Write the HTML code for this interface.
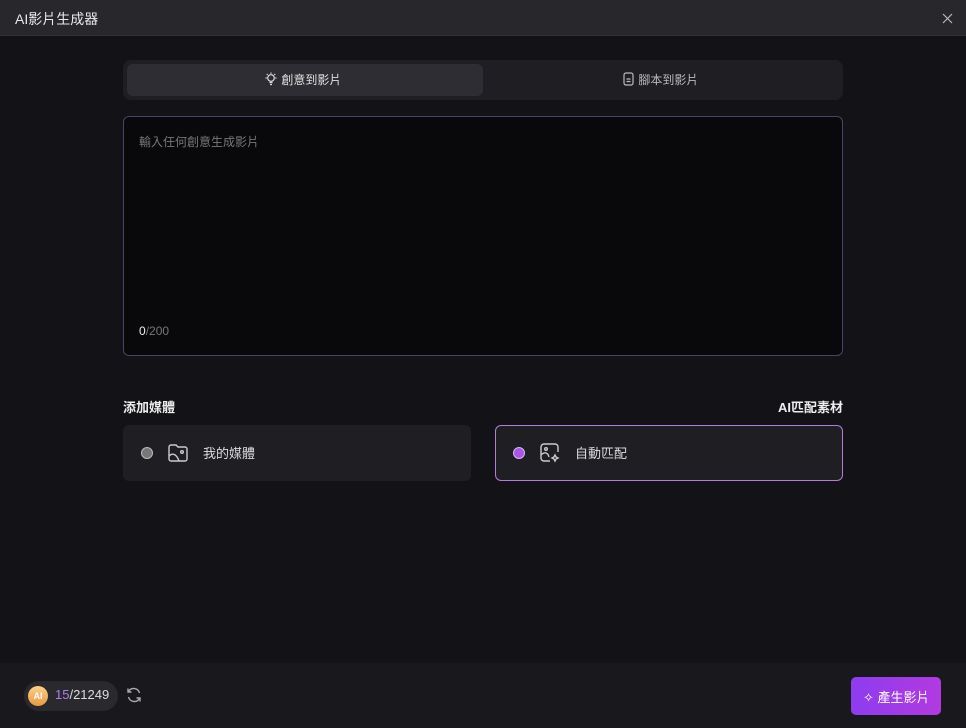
<!DOCTYPE html>
<html><head><meta charset="utf-8"><style>
*{box-sizing:border-box;margin:0;padding:0}
body{width:966px;height:728px;background:#131217;font-family:"Liberation Sans","Noto Sans CJK TC",sans-serif;color:#ddd;position:relative;overflow:hidden}
.abs{position:absolute}
</style></head><body>
<div class="abs" style="left:0;top:0;width:966px;height:36px;background:#28272c;border-bottom:1px solid #333238"></div>
<div class="abs" style="left:15px;top:9px;font-size:14px;color:#e8e8e8">AI影片生成器</div>
<svg class="abs" style="left:942px;top:13px" width="11" height="11" viewBox="0 0 11 11" stroke="#bbb" stroke-width="1.2"><path d="M1 1l9 9M10 1l-9 9"/></svg>

<div class="abs" style="left:123px;top:60px;width:720px;height:40px;background:#1f1e23;border-radius:8px"></div>
<div class="abs" style="left:127px;top:64px;width:356px;height:32px;background:#2e2d33;border-radius:6px"></div>
<div class="abs" style="left:264px;top:71px;font-size:12px;color:#e0e0e0">
<svg width="14" height="14" viewBox="0 0 14 14" style="vertical-align:-2px" fill="none" stroke="#ddd" stroke-width="1.2"><circle cx="7" cy="6" r="3.3"/><path d="M5.5 10.5h3M6 12.5h2M7 0.5v1.2M1.5 6h1.2M11.3 6h1.2M2.8 2l.9.9M11.2 2l-.9.9"/></svg> 創意到影片</div>
<div class="abs" style="left:622px;top:71px;font-size:12px;color:#bbb">
<svg width="13" height="14" viewBox="0 0 13 14" style="vertical-align:-2px" fill="none" stroke="#bbb" stroke-width="1.2"><rect x="2" y="1" width="9" height="12" rx="2"/><path d="M4.5 7h4M4.5 9.5h4"/></svg> 腳本到影片</div>

<div class="abs" style="left:123px;top:116px;width:720px;height:240px;background:#09080b;border:1px solid #4d4266;border-radius:6px"></div>
<div class="abs" style="left:139px;top:133px;font-size:12px;color:#777">輸入任何創意生成影片</div>
<div class="abs" style="left:139px;top:324px;font-size:12px;color:#777"><span style="color:#eee">0</span>/200</div>

<div class="abs" style="left:123px;top:397px;font-size:13px;font-weight:bold;color:#eee">添加媒體</div>
<div class="abs" style="right:123px;top:397px;font-size:13px;font-weight:bold;color:#eee">AI匹配素材</div>

<div class="abs" style="left:123px;top:425px;width:348px;height:56px;background:#1f1e23;border-radius:6px"></div>
<div class="abs" style="left:141px;top:447px;width:12px;height:12px;border-radius:50%;background:#777;border:1.5px solid #bbb"></div>
<svg class="abs" style="left:167px;top:442px" width="22" height="22" viewBox="0 0 22 22" fill="none" stroke="#ccc" stroke-width="1.4"><path d="M2 5a2 2 0 0 1 2-2h5l2 2h7a2 2 0 0 1 2 2v10a2 2 0 0 1-2 2H4a2 2 0 0 1-2-2z"/><path d="M2 14c4-4 8-1 10 5"/><circle cx="15" cy="10" r="1.3"/></svg>
<div class="abs" style="left:203px;top:443px;font-size:13px;color:#ddd">我的媒體</div>

<div class="abs" style="left:495px;top:425px;width:348px;height:56px;background:#1f1e23;border:1px solid #b27ed8;border-radius:6px"></div>
<div class="abs" style="left:513px;top:447px;width:12px;height:12px;border-radius:50%;background:#a855e8;border:1.5px solid #d9b3f5"></div>
<svg class="abs" style="left:539px;top:442px" width="22" height="22" viewBox="0 0 22 22" fill="none" stroke="#ccc" stroke-width="1.4"><path d="M11 19H5a3 3 0 0 1-3-3V5a3 3 0 0 1 3-3h11a3 3 0 0 1 3 3v5"/><path d="M2 13c4-4 7-2 8 2"/><circle cx="7" cy="7" r="1.3"/><path d="M16 13l1 2 2 1-2 1-1 2-1-2-2-1 2-1z"/></svg>
<div class="abs" style="left:575px;top:443px;font-size:13px;color:#ddd">自動匹配</div>

<div class="abs" style="left:0;top:663px;width:966px;height:65px;background:#19181d"></div>
<div class="abs" style="left:24px;top:681px;width:94px;height:30px;background:#2a292e;border-radius:15px"></div>
<div class="abs" style="left:28px;top:686px;width:20px;height:20px;border-radius:50%;background:linear-gradient(#ffd08a,#e89a40);font-size:9px;color:#fff;text-align:center;line-height:20px;font-weight:bold">AI</div>
<div class="abs" style="left:55px;top:687px;font-size:13px;color:#ddd"><span style="color:#b07ee8">15</span>/21249</div>
<svg class="abs" style="left:125px;top:686px" width="18" height="18" viewBox="0 0 18 18" fill="none" stroke="#aaa" stroke-width="1.4"><path d="M14.5 7A6 6 0 0 0 3.5 5.5M3.5 11a6 6 0 0 0 11 1.5"/><path d="M3 2.5v3.5h3.5M15 15.5V12h-3.5"/></svg>
<div class="abs" style="left:851px;top:677px;width:90px;height:38px;border-radius:5px;background:linear-gradient(90deg,#8d3cf0,#b23ae0)"></div>
<div class="abs" style="left:863px;top:687px;font-size:13px;color:#fff">✧ 產生影片</div>
</body></html>
